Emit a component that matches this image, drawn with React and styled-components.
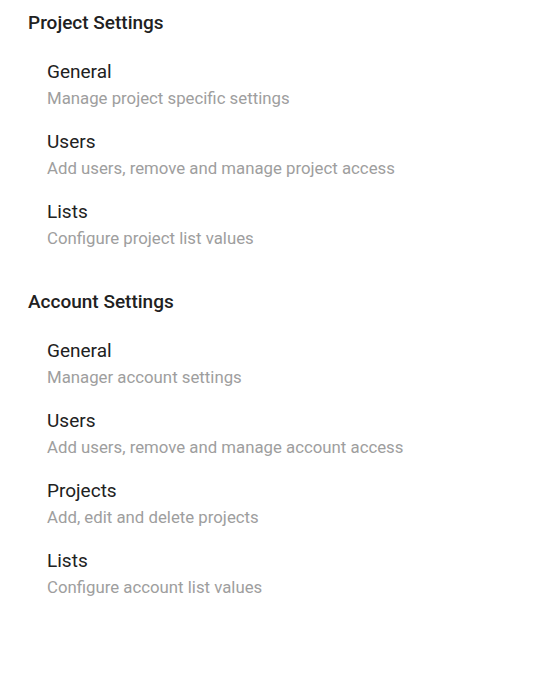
import React from "react";
import styled, { createGlobalStyle } from "styled-components";

const Global = createGlobalStyle`
  html, body { margin: 0; padding: 0; background: #fff; }
  body { font-family: Roboto, "Noto Sans", Arial, sans-serif; -webkit-font-smoothing: antialiased; }
`;

const Page = styled.div`
  padding: 11px 28px 0 28px;
  display: flex;
  flex-direction: column;
  gap: 39px;
`;

const Section = styled.section`
  display: flex;
  flex-direction: column;
  gap: 24px;
`;

const Heading = styled.h2`
  margin: 0;
  font-size: 19px;
  line-height: 24px;
  font-weight: 500;
  color: #212121;
`;

const List = styled.div`
  display: flex;
  flex-direction: column;
  gap: 18px;
  padding-left: 19px;
`;

const Item = styled.div`
  display: flex;
  flex-direction: column;
  cursor: pointer;
`;

const Title = styled.div`
  font-size: 19px;
  line-height: 26px;
  color: #212121;
`;

const Desc = styled.div`
  font-size: 16.8px;
  line-height: 26px;
  color: #9e9e9e;
`;

const sections = [
  {
    title: "Project Settings",
    items: [
      ["General", "Manage project specific settings"],
      ["Users", "Add users, remove and manage project access"],
      ["Lists", "Configure project list values"],
    ],
  },
  {
    title: "Account Settings",
    items: [
      ["General", "Manager account settings"],
      ["Users", "Add users, remove and manage account access"],
      ["Projects", "Add, edit and delete projects"],
      ["Lists", "Configure account list values"],
    ],
  },
];

export default function App() {
  return (
    <>
      <Global />
      <Page>
        {sections.map((s) => (
          <Section key={s.title}>
            <Heading>{s.title}</Heading>
            <List>
              {s.items.map(([t, d]) => (
                <Item key={t}>
                  <Title>{t}</Title>
                  <Desc>{d}</Desc>
                </Item>
              ))}
            </List>
          </Section>
        ))}
      </Page>
    </>
  );
}
